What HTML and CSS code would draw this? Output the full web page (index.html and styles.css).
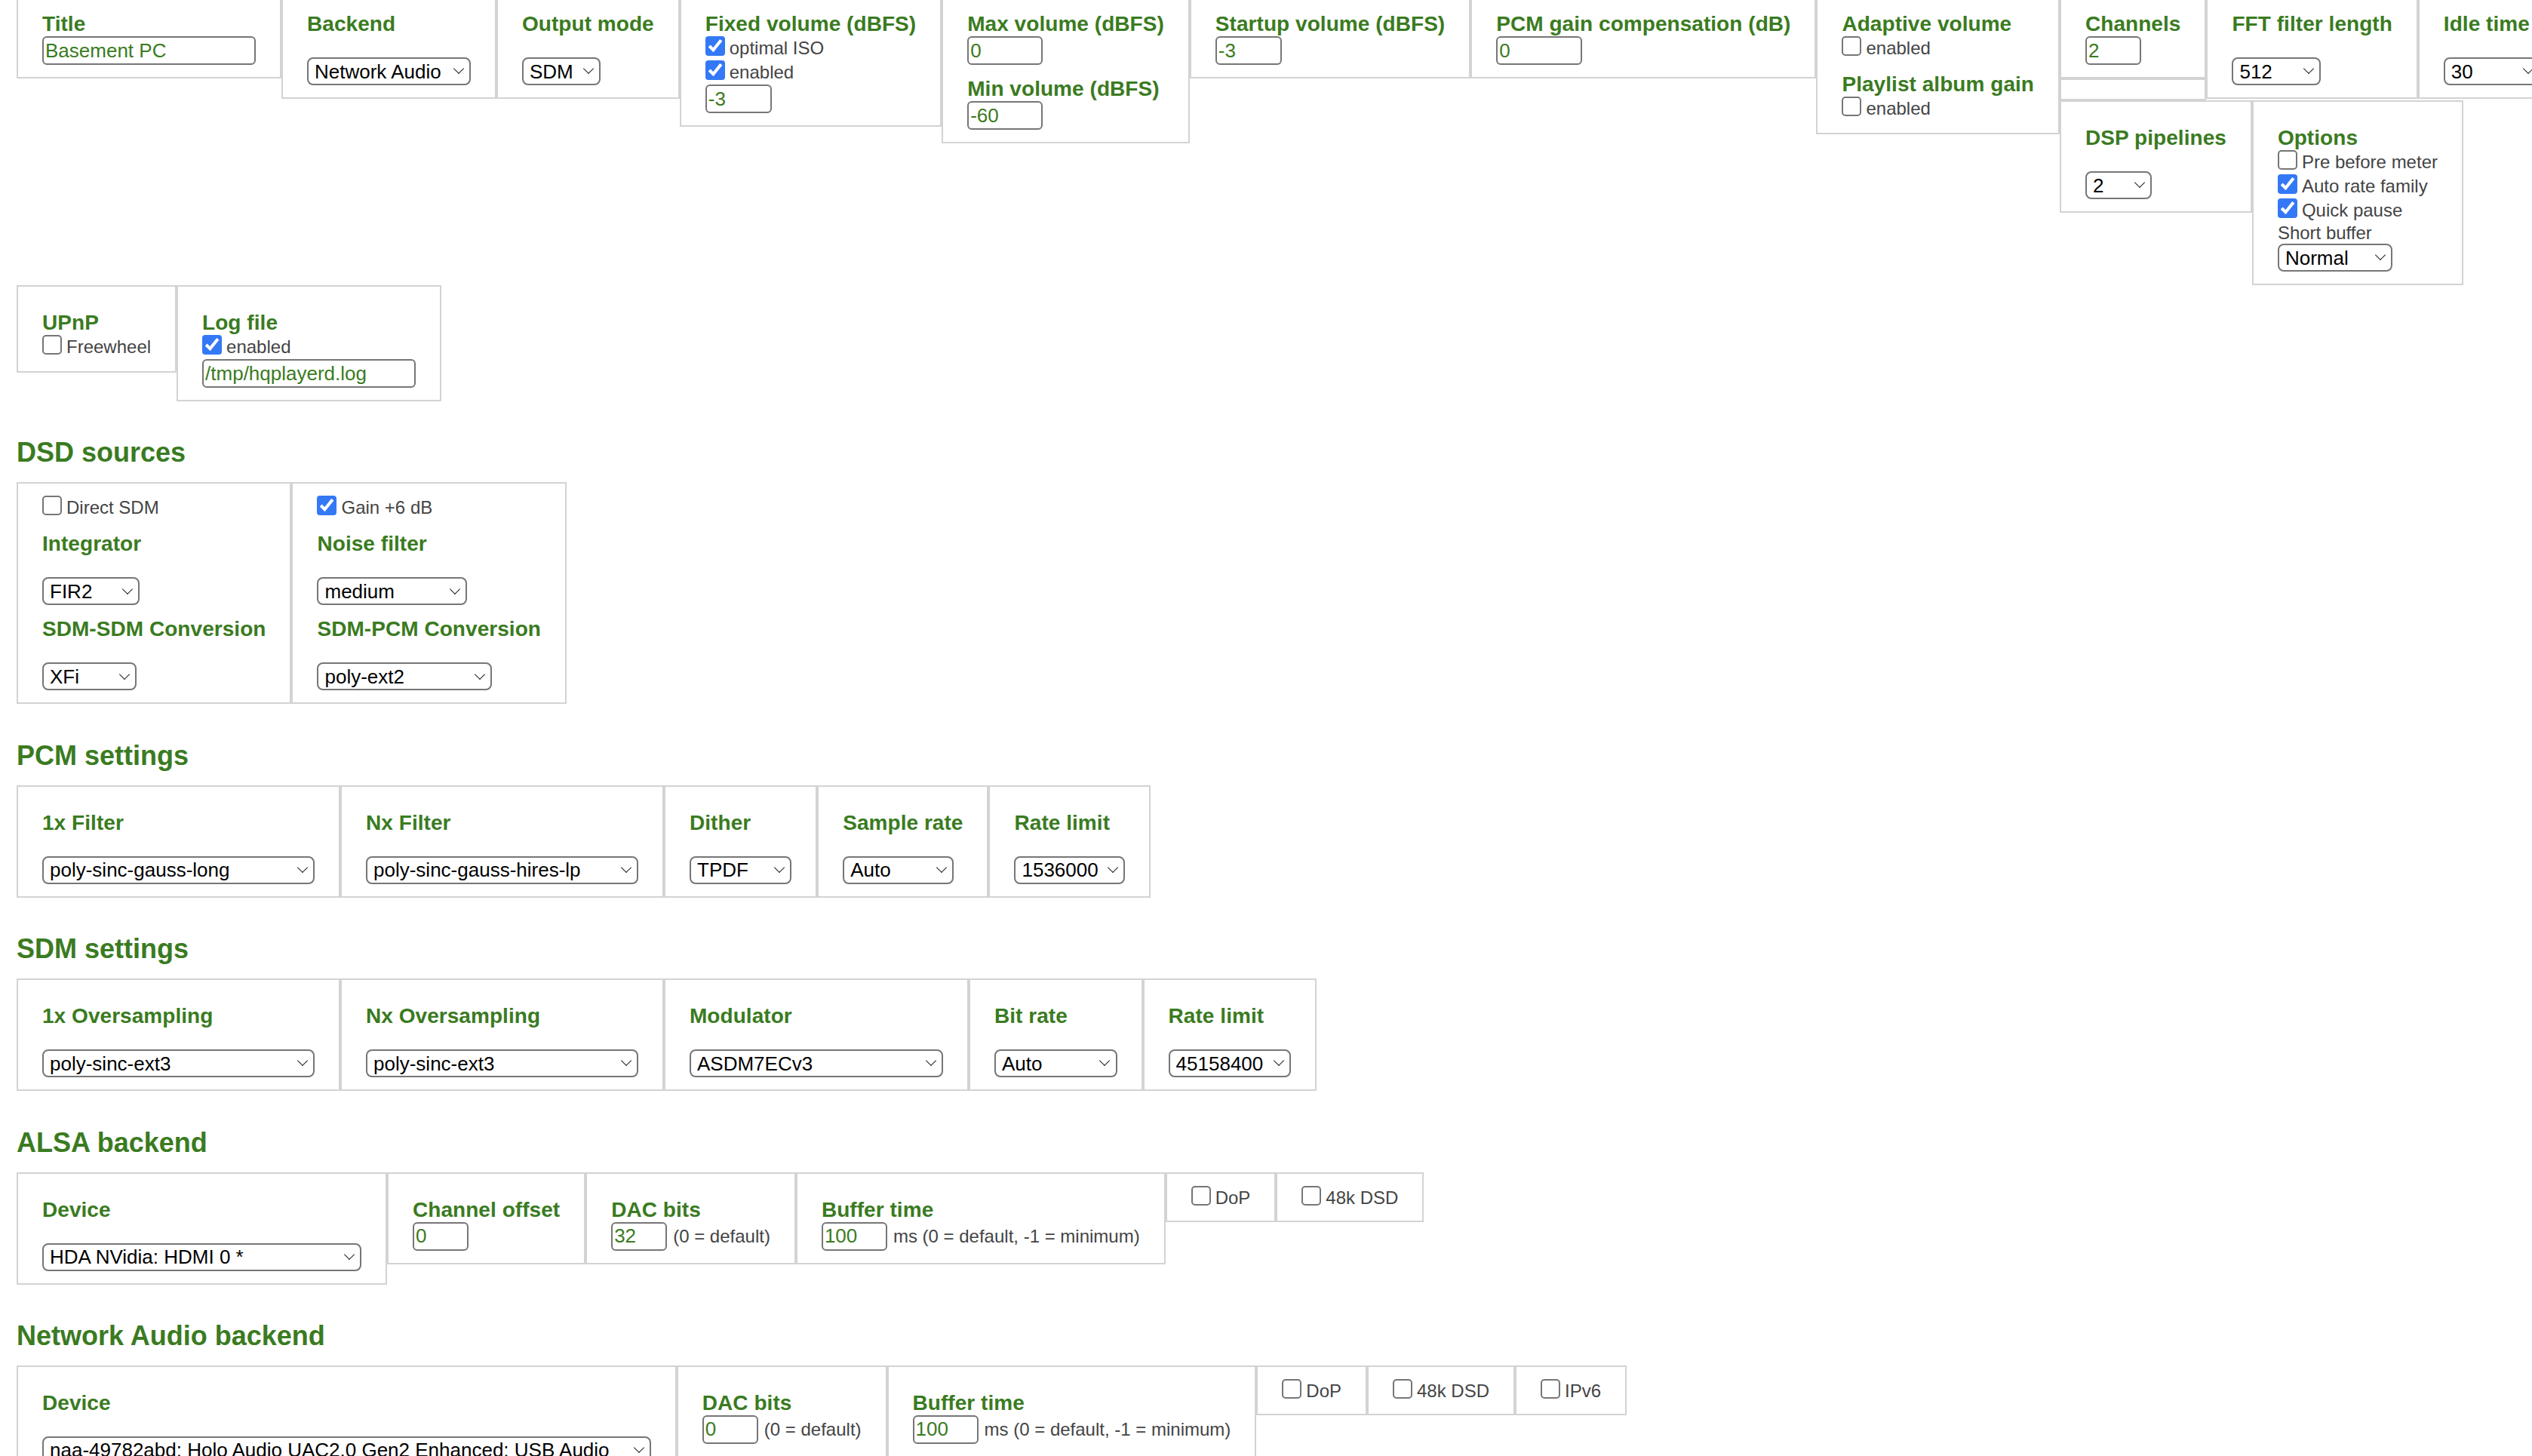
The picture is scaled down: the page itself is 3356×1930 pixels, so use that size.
FILE: index.html
```html
<!DOCTYPE html>
<html>
<head>
<meta charset="utf-8">
<title>Settings</title>
<link rel="stylesheet" href="styles.css">
</head>
<body>
<div class="page">

  <div class="group top">
    <div class="box">
      <div class="lbl">Title</div>
      <input class="txt w141" type="text" value="Basement PC">
    </div>
    <div class="box">
      <div class="lbl">Backend</div>
      <span class="sel gap"><select class="s108"><option>Network Audio</option></select></span>
    </div>
    <div class="box">
      <div class="lbl">Output mode</div>
      <span class="sel gap"><select class="s52"><option>SDM</option></select></span>
    </div>
    <div class="box">
      <div class="lbl">Fixed volume (dBFS)</div>
      <label class="check"><input type="checkbox" checked><span>optimal ISO</span></label>
      <label class="check"><input type="checkbox" checked><span>enabled</span></label>
      <input class="txt w44" type="text" value="-3">
    </div>
    <div class="box">
      <div class="lbl">Max volume (dBFS)</div>
      <input class="txt w50" type="text" value="0">
      <div class="lbl">Min volume (dBFS)</div>
      <input class="txt w50" type="text" value="-60">
    </div>
    <div class="box">
      <div class="lbl">Startup volume (dBFS)</div>
      <input class="txt w44" type="text" value="-3">
    </div>
    <div class="box">
      <div class="lbl">PCM gain compensation (dB)</div>
      <input class="txt w57" type="text" value="0">
    </div>
    <div class="box">
      <div class="lbl">Adaptive volume</div>
      <label class="check"><input type="checkbox"><span>enabled</span></label>
      <div class="lbl">Playlist album gain</div>
      <label class="check"><input type="checkbox"><span>enabled</span></label>
    </div>
    <div class="stack">
      <div class="row">
        <div class="col">
          <div class="box">
            <div class="lbl">Channels</div>
            <input class="txt w37" type="text" value="2">
          </div>
          <div class="box filler"></div>
        </div>
        <div class="box">
          <div class="lbl">FFT filter length</div>
          <span class="sel gap"><select class="s59"><option>512</option></select></span>
        </div>
        <div class="box">
          <div class="lbl">Idle time</div>
          <span class="sel gap"><select class="s64"><option>30</option></select></span>
        </div>
      </div>
      <div class="row">
        <div class="box">
          <div class="lbl">DSP pipelines</div>
          <span class="sel gap"><select class="s44"><option>2</option></select></span>
        </div>
        <div class="box">
          <div class="lbl">Options</div>
          <label class="check"><input type="checkbox"><span>Pre before meter</span></label>
          <label class="check"><input type="checkbox" checked><span>Auto rate family</span></label>
          <label class="check"><input type="checkbox" checked><span>Quick pause</span></label>
          <div class="note">Short buffer</div>
          <span class="sel"><select class="s76"><option>Normal</option></select></span>
        </div>
      </div>
    </div>
  </div>

  <div class="group">
    <div class="box">
      <div class="lbl">UPnP</div>
      <label class="check"><input type="checkbox"><span>Freewheel</span></label>
    </div>
    <div class="box">
      <div class="lbl">Log file</div>
      <label class="check"><input type="checkbox" checked><span>enabled</span></label>
      <input class="txt w141" type="text" value="/tmp/hqplayerd.log">
    </div>
  </div>

  <h2 class="head">DSD sources</h2>
  <div class="group">
    <div class="box">
      <label class="check"><input type="checkbox"><span>Direct SDM</span></label>
      <div class="lbl">Integrator</div>
      <span class="sel gap"><select class="s65"><option>FIR2</option></select></span>
      <div class="lbl">SDM-SDM Conversion</div>
      <span class="sel gap"><select class="s63"><option>XFi</option></select></span>
    </div>
    <div class="box">
      <label class="check"><input type="checkbox" checked><span>Gain +6 dB</span></label>
      <div class="lbl">Noise filter</div>
      <span class="sel gap"><select class="s99"><option>medium</option></select></span>
      <div class="lbl">SDM-PCM Conversion</div>
      <span class="sel gap"><select class="s116"><option>poly-ext2</option></select></span>
    </div>
  </div>

  <h2 class="head">PCM settings</h2>
  <div class="group">
    <div class="box">
      <div class="lbl">1x Filter</div>
      <span class="sel gap"><select class="s180"><option>poly-sinc-gauss-long</option></select></span>
    </div>
    <div class="box">
      <div class="lbl">Nx Filter</div>
      <span class="sel gap"><select class="s180"><option>poly-sinc-gauss-hires-lp</option></select></span>
    </div>
    <div class="box">
      <div class="lbl">Dither</div>
      <span class="sel gap"><select class="s68"><option>TPDF</option></select></span>
    </div>
    <div class="box">
      <div class="lbl">Sample rate</div>
      <span class="sel gap"><select class="s74"><option>Auto</option></select></span>
    </div>
    <div class="box">
      <div class="lbl">Rate limit</div>
      <span class="sel gap"><select class="s74"><option>1536000</option></select></span>
    </div>
  </div>

  <h2 class="head">SDM settings</h2>
  <div class="group">
    <div class="box">
      <div class="lbl">1x Oversampling</div>
      <span class="sel gap"><select class="s180"><option>poly-sinc-ext3</option></select></span>
    </div>
    <div class="box">
      <div class="lbl">Nx Oversampling</div>
      <span class="sel gap"><select class="s180"><option>poly-sinc-ext3</option></select></span>
    </div>
    <div class="box">
      <div class="lbl">Modulator</div>
      <span class="sel gap"><select class="s168"><option>ASDM7ECv3</option></select></span>
    </div>
    <div class="box">
      <div class="lbl">Bit rate</div>
      <span class="sel gap"><select class="s81"><option>Auto</option></select></span>
    </div>
    <div class="box">
      <div class="lbl">Rate limit</div>
      <span class="sel gap"><select class="s81"><option>45158400</option></select></span>
    </div>
  </div>

  <h2 class="head">ALSA backend</h2>
  <div class="group">
    <div class="box">
      <div class="lbl">Device</div>
      <span class="sel gap"><select class="s212"><option>HDA NVidia: HDMI 0 *</option></select></span>
    </div>
    <div class="box">
      <div class="lbl">Channel offset</div>
      <input class="txt w37" type="text" value="0">
    </div>
    <div class="box">
      <div class="lbl">DAC bits</div>
      <div class="inl"><input class="txt w37" type="text" value="32"><span class="hint">(0 = default)</span></div>
    </div>
    <div class="box">
      <div class="lbl">Buffer time</div>
      <div class="inl"><input class="txt w43" type="text" value="100"><span class="hint">ms (0 = default, -1 = minimum)</span></div>
    </div>
    <div class="box flag">
      <label class="check"><input type="checkbox"><span>DoP</span></label>
    </div>
    <div class="box flag">
      <label class="check"><input type="checkbox"><span>48k DSD</span></label>
    </div>
  </div>

  <h2 class="head">Network Audio backend</h2>
  <div class="group">
    <div class="box">
      <div class="lbl">Device</div>
      <span class="sel gap"><select class="s403"><option>naa-49782abd: Holo Audio UAC2.0 Gen2 Enhanced: USB Audio</option></select></span>
    </div>
    <div class="box">
      <div class="lbl">DAC bits</div>
      <div class="inl"><input class="txt w37" type="text" value="0"><span class="hint">(0 = default)</span></div>
    </div>
    <div class="box">
      <div class="lbl">Buffer time</div>
      <div class="inl"><input class="txt w43" type="text" value="100"><span class="hint">ms (0 = default, -1 = minimum)</span></div>
    </div>
    <div class="box flag">
      <label class="check"><input type="checkbox"><span>DoP</span></label>
    </div>
    <div class="box flag">
      <label class="check"><input type="checkbox"><span>48k DSD</span></label>
    </div>
    <div class="box flag">
      <label class="check"><input type="checkbox"><span>IPv6</span></label>
    </div>
  </div>

</div>
</body>
</html>
```

FILE: styles.css
```css
html {
  zoom: 2;
  overflow: hidden;
  background: #fff;
}

body {
  margin: 0;
  overflow: hidden;
  font-family: "Liberation Sans", Arial, sans-serif;
  color: #444;
}

.page {
  padding-left: 11px;
}

.group {
  display: flex;
  align-items: flex-start;
}

.top {
  margin-top: -9px;
}

.box {
  flex: none;
  border: 1px solid #d3d3d3;
  padding: 8px 16px;
}

.stack {
  flex: none;
  display: flex;
  flex-direction: column;
}

.row {
  display: flex;
  align-items: flex-start;
}

.col {
  flex: none;
  align-self: stretch;
  display: flex;
  flex-direction: column;
}

.filler {
  flex: 1;
  min-height: 14.5px;
  box-sizing: border-box;
  padding: 0;
}

.lbl {
  margin-top: 8px;
  font-size: 14px;
  font-weight: bold;
  line-height: normal;
  letter-spacing: 0.025px;
  color: #3a7b21;
  white-space: nowrap;
}

.head {
  margin: 23.7px 0 9px;
  font-size: 18px;
  font-weight: bold;
  line-height: normal;
  color: #3a7b21;
}

.check {
  display: flex;
  height: 16px;
  font-size: 12px;
  line-height: 16px;
  color: #444;
  white-space: nowrap;
}

.flag .check {
  height: 15px;
}

.check input {
  flex: none;
  align-self: flex-start;
  width: 13px;
  height: 13px;
  margin: 0 3px 0 0;
  accent-color: #3478f6;
}

.note {
  font-size: 12px;
  line-height: normal;
  color: #444;
}

.txt {
  display: block;
  box-sizing: border-box;
  height: 19px;
  margin: 0;
  padding: 0 0 0 1px;
  border: 1px solid #767676;
  border-radius: 3px;
  background: #fff;
  font-family: "Liberation Sans", Arial, sans-serif;
  font-size: 13px;
  color: #3a7b21;
  outline: none;
}

.inl {
  display: flex;
  align-items: baseline;
}

.hint {
  margin-left: 4px;
  font-size: 12px;
  color: #444;
  white-space: nowrap;
}

.sel {
  position: relative;
  display: block;
  width: max-content;
}

.sel.gap {
  margin-top: 14px;
}

.sel::after {
  content: "";
  position: absolute;
  right: 5.6px;
  top: 5.1px;
  width: 5px;
  height: 5px;
  box-sizing: border-box;
  border-right: 0.75px solid #222;
  border-bottom: 0.75px solid #222;
  transform: rotate(45deg);
  pointer-events: none;
}

.sel select {
  display: block;
  appearance: none;
  -webkit-appearance: none;
  box-sizing: border-box;
  height: 18.5px;
  margin: 0;
  padding: 0 14px 0 4px;
  border: 1px solid #767676;
  border-radius: 4px;
  background: #fff;
  font-family: "Liberation Sans", Arial, sans-serif;
  font-size: 13px;
  color: #000;
  outline: none;
  overflow: hidden;
  white-space: nowrap;
}

.w37 { width: 37px; }
.w43 { width: 43.5px; }
.w44 { width: 44px; }
.w50 { width: 50px; }
.w57 { width: 57px; }
.w141 { width: 141.5px; }

.s44 { width: 44px; }
.s52 { width: 52px; }
.s59 { width: 59px; }
.s63 { width: 62.6px; }
.s64 { width: 64px; }
.s65 { width: 64.6px; }
.s68 { width: 67.6px; }
.s74 { width: 73.5px; }
.s76 { width: 76px; }
.s81 { width: 81.3px; }
.s99 { width: 99.2px; }
.s108 { width: 108.5px; }
.s116 { width: 116px; }
.s168 { width: 168px; }
.s180 { width: 180.5px; }
.s212 { width: 211.5px; }
.s403 { width: 403.4px; }
```
